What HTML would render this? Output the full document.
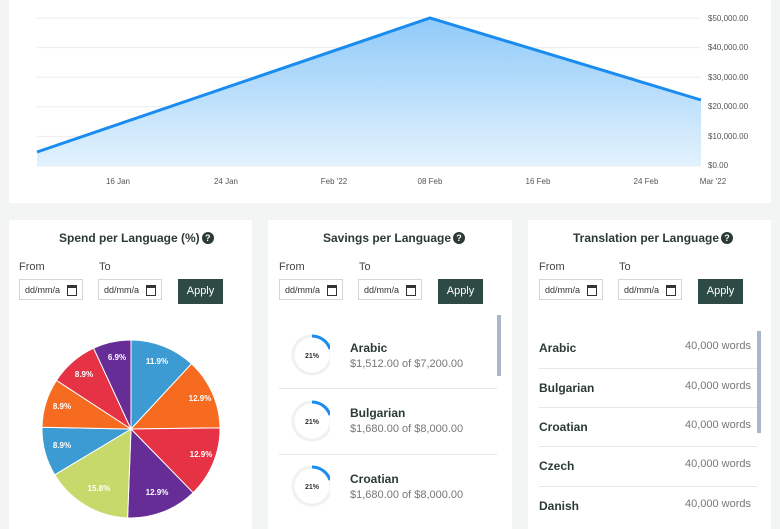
<!DOCTYPE html><html><head><style>
*{margin:0;padding:0;box-sizing:border-box}
body{width:780px;height:529px;background:#f3f4f4;position:relative;overflow:hidden;font-family:"Liberation Sans",sans-serif;color:#2b3a36}
.card{position:absolute;background:#fff}
.t{position:absolute;font-size:12px;font-weight:bold;white-space:nowrap}
.q{display:inline-block;width:12px;height:12px;border-radius:50%;background:#2b3a36;color:#fff;font-size:9px;text-align:center;line-height:12px;vertical-align:1px;margin-left:2px}
.lb{position:absolute;font-size:11px;color:#444}
.in{position:absolute;width:64px;height:21px;border:1px solid #cfd8d6;font-size:9px;color:#333;padding:5px 0 0 5px}
.in:after{content:"";position:absolute;right:5px;top:5px;width:8px;height:7px;border:1.5px solid #333;border-top-width:3px}
.ap{position:absolute;width:45px;height:25px;background:#2d4a44;color:#fff;font-size:11px;text-align:center;line-height:25px}
.nm{position:absolute;font-size:12px;font-weight:bold;color:#2b3a36}
.sm{position:absolute;font-size:11px;color:#777}
.hr{position:absolute;height:1px;background:#e6e9e8}
</style></head><body>
<div class="card" style="left:9px;top:0;width:762px;height:203px"></div>
<svg style="position:absolute;left:0;top:0" width="780" height="210">
<defs><linearGradient id="g" x1="0" y1="0" x2="0" y2="1"><stop offset="0" stop-color="#90caf9"/><stop offset="1" stop-color="#e3f2fd"/></linearGradient></defs>
<g stroke="#ececec" stroke-width="1"><line x1="37" x2="701" y1="18" y2="18"/><line x1="37" x2="701" y1="47.6" y2="47.6"/><line x1="37" x2="701" y1="77.2" y2="77.2"/><line x1="37" x2="701" y1="106.8" y2="106.8"/><line x1="37" x2="701" y1="136.4" y2="136.4"/><line x1="37" x2="701" y1="166" y2="166"/></g>
<path d="M37 152 L430 18 L701 100 L701 166 L37 166Z" fill="url(#g)"/>
<path d="M37 152 L430 18 L701 100" fill="none" stroke="#1a8cf0" stroke-width="3"/>
<g font-size="8" fill="#555" font-family="Liberation Sans"><text x="708" y="21">$50,000.00</text><text x="708" y="50">$40,000.00</text><text x="708" y="80">$30,000.00</text><text x="708" y="109">$20,000.00</text><text x="708" y="139">$10,000.00</text><text x="708" y="168">$0.00</text>
<g text-anchor="middle"><text x="118" y="184">16 Jan</text><text x="226" y="184">24 Jan</text><text x="334" y="184">Feb '22</text><text x="430" y="184">08 Feb</text><text x="538" y="184">16 Feb</text><text x="646" y="184">24 Feb</text><text x="713" y="184">Mar '22</text></g></g>
</svg>

<div class="card" style="left:9px;top:220px;width:243px;height:309px"></div>
<div class="card" style="left:268px;top:220px;width:244px;height:309px"></div>
<div class="card" style="left:528px;top:220px;width:243px;height:309px"></div>

<div class="t" style="left:59px;top:231px">Spend per Language (%)<span class="q">?</span></div>
<div class="t" style="left:323px;top:231px">Savings per Language<span class="q">?</span></div>
<div class="t" style="left:573px;top:231px">Translation per Language<span class="q">?</span></div>

<div class="lb" style="left:19px;top:261px">From</div><div class="lb" style="left:99px;top:261px">To</div>
<div class="in" style="left:19px;top:279px">dd/mm/a</div><div class="in" style="left:98px;top:279px">dd/mm/a</div><div class="ap" style="left:178px;top:279px">Apply</div>
<div class="lb" style="left:279px;top:261px">From</div><div class="lb" style="left:359px;top:261px">To</div>
<div class="in" style="left:279px;top:279px">dd/mm/a</div><div class="in" style="left:358px;top:279px">dd/mm/a</div><div class="ap" style="left:438px;top:279px">Apply</div>
<div class="lb" style="left:539px;top:261px">From</div><div class="lb" style="left:619px;top:261px">To</div>
<div class="in" style="left:539px;top:279px">dd/mm/a</div><div class="in" style="left:618px;top:279px">dd/mm/a</div><div class="ap" style="left:698px;top:279px">Apply</div>

<svg style="position:absolute;left:0;top:0" width="260" height="529">
<g stroke="#fff" stroke-width="1">
<path d="M131 429 L131 340 A89 89 0 0 1 191.5 363.8Z" fill="#3d9bd3"/>
<path d="M131 429 L191.5 363.8 A89 89 0 0 1 220 427.9Z" fill="#f76b21"/>
<path d="M131 429 L220 427.9 A89 89 0 0 1 193.1 492.7Z" fill="#e53245"/>
<path d="M131 429 L193.1 492.7 A89 89 0 0 1 127.6 517.9Z" fill="#662d96"/>
<path d="M131 429 L127.6 517.9 A89 89 0 0 1 54.7 474.8Z" fill="#c6d96a"/>
<path d="M131 429 L54.7 474.8 A89 89 0 0 1 42 427.3Z" fill="#3d9bd3"/>
<path d="M131 429 L42 427.3 A89 89 0 0 1 56.5 380.4Z" fill="#f76b21"/>
<path d="M131 429 L56.5 380.4 A89 89 0 0 1 93.6 348.2Z" fill="#e53245"/>
<path d="M131 429 L93.6 348.2 A89 89 0 0 1 131 340Z" fill="#662d96"/>
</g>
<g font-size="8" font-weight="bold" fill="#fff" text-anchor="middle" font-family="Liberation Sans">
<text x="157" y="364">11.9%</text><text x="200" y="401">12.9%</text><text x="201" y="457">12.9%</text><text x="157" y="495">12.9%</text><text x="99" y="491">15.8%</text><text x="62" y="448">8.9%</text><text x="62" y="409">8.9%</text><text x="84" y="377">8.9%</text><text x="117" y="360">6.9%</text></g>
</svg>

<svg style="position:absolute;left:270px;top:300px" width="60" height="229">
<g fill="none" stroke-width="3"><circle cx="42" cy="55" r="19" stroke="#f0f1f1"/><circle cx="42" cy="121" r="19" stroke="#f0f1f1"/><circle cx="42" cy="186" r="19" stroke="#f0f1f1"/>
<path d="M42 36 A19 19 0 0 1 60 49" stroke="#1a8cf0"/><path d="M42 102 A19 19 0 0 1 60 115" stroke="#1a8cf0"/><path d="M42 167 A19 19 0 0 1 60 180" stroke="#1a8cf0"/></g>
<g font-size="7" font-weight="bold" fill="#333" text-anchor="middle" font-family="Liberation Sans"><text x="42" y="58">21%</text><text x="42" y="124">21%</text><text x="42" y="189">21%</text></g>
</svg>
<div class="nm" style="left:350px;top:341px">Arabic</div><div class="sm" style="left:350px;top:358px">$1,512.00 of $7,200.00</div>
<div class="nm" style="left:350px;top:406px">Bulgarian</div><div class="sm" style="left:350px;top:423px">$1,680.00 of $8,000.00</div>
<div class="nm" style="left:350px;top:472px">Croatian</div><div class="sm" style="left:350px;top:489px">$1,680.00 of $8,000.00</div>
<div class="hr" style="left:279px;top:388px;width:218px"></div><div class="hr" style="left:279px;top:454px;width:218px"></div>
<div style="position:absolute;left:497px;top:315px;width:4px;height:61px;background:#aab6cc"></div>

<div class="nm" style="left:539px;top:341px">Arabic</div><div class="sm" style="left:660px;top:340px;width:91px;text-align:right">40,000 words</div>
<div class="nm" style="left:539px;top:381px">Bulgarian</div><div class="sm" style="left:660px;top:380px;width:91px;text-align:right">40,000 words</div>
<div class="nm" style="left:539px;top:420px">Croatian</div><div class="sm" style="left:660px;top:419px;width:91px;text-align:right">40,000 words</div>
<div class="nm" style="left:539px;top:459px">Czech</div><div class="sm" style="left:660px;top:458px;width:91px;text-align:right">40,000 words</div>
<div class="nm" style="left:539px;top:499px">Danish</div><div class="sm" style="left:660px;top:498px;width:91px;text-align:right">40,000 words</div>
<div class="hr" style="left:539px;top:368px;width:218px"></div><div class="hr" style="left:539px;top:407px;width:218px"></div><div class="hr" style="left:539px;top:446px;width:218px"></div><div class="hr" style="left:539px;top:486px;width:218px"></div>
<div style="position:absolute;left:757px;top:331px;width:4px;height:102px;background:#aab6cc"></div>
</body></html>
